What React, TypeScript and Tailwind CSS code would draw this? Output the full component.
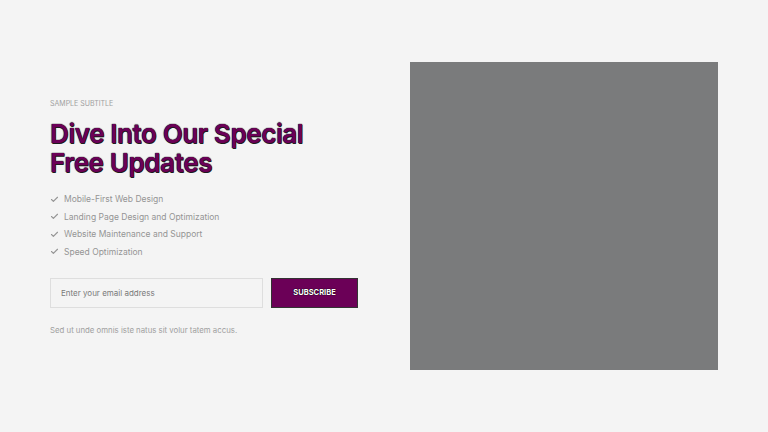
import { Check } from "lucide-react";

const FEATURES = [
  "Mobile-First Web Design",
  "Landing Page Design and Optimization",
  "Website Maintenance and Support",
  "Speed Optimization",
];

export default function App() {
  return (
    <div
      className="min-h-[432px] w-full bg-[#f4f4f4] flex items-center justify-center"
      style={{ fontFamily: "Inter, 'Noto Sans', sans-serif" }}
    >
      <div className="flex items-center gap-[52px]">
        <div className="w-[308px] flex flex-col pt-[5px]">
          <p className="text-[7px] uppercase text-[#a0a0a0] leading-none">Sample Subtitle</p>
          <h1 className="mt-[12px] text-[26px] font-semibold leading-[29px] tracking-[-0.4px] text-[#6b0057] [text-shadow:0_0_1px_#111,0_0_1px_#111,0.5px_0.5px_0_#222]">
            Dive Into Our Special
            <br />
            Free Updates
          </h1>
          <ul className="mt-[16px] flex flex-col gap-[5.5px]">
            {FEATURES.map((f) => (
              <li key={f} className="flex items-center gap-[5px] text-[8.5px] leading-[12px] text-[#959595]">
                <Check className="w-[9px] h-[9px] text-[#959595]" strokeWidth={3} />
                <span>{f}</span>
              </li>
            ))}
          </ul>
          <div className="mt-[20px] flex gap-[8px]">
            <input
              placeholder="Enter your email address"
              className="w-[213px] h-[30px] border border-[#dedede] bg-[#f4f4f4] px-[10px] text-[8px] text-[#666] placeholder:text-[#7a7a7a] outline-none"
            />
            <button className="w-[87px] h-[30px] bg-[#6b0057] border border-[#333] text-white text-[7.5px] font-bold uppercase [text-shadow:0_0_1px_#000,0_0_1px_#000]">
              Subscribe
            </button>
          </div>
          <p className="mt-[17px] text-[7.8px] text-[#a0a0a0]">Sed ut unde omnis iste natus sit volur tatem accus.</p>
        </div>
        <div className="w-[308px] h-[308px] bg-[#7a7b7c]" />
      </div>
    </div>
  );
}
